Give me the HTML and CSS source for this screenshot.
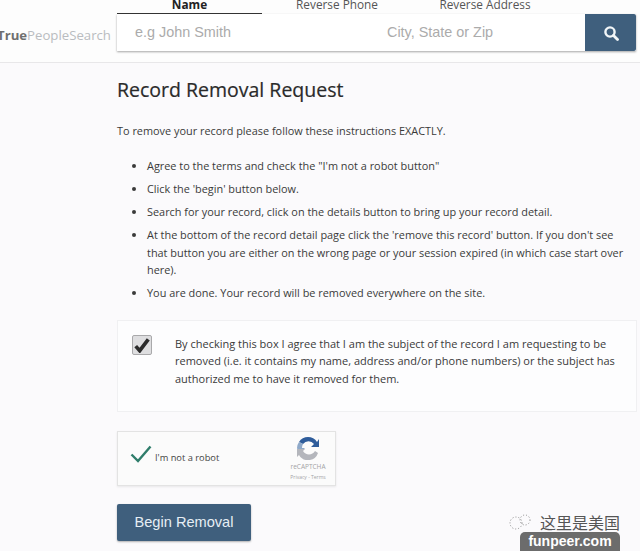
FILE: index.html
```html
<!DOCTYPE html>
<html lang="en">

<head>
    <meta charset="UTF-8">
    <title>Record Removal Request</title>
    <link rel="stylesheet" href="styles.css">
</head>

<body>
    <header class="top">
        <div class="logo"><b>True</b>PeopleSearch</div>
        <div class="search">
            <ul class="tabs">
                <li class="active">Name</li>
                <li>Reverse Phone</li>
                <li>Reverse Address</li>
            </ul>
            <div class="bar">
                <div class="field name">e.g John Smith</div>
                <div class="field city">City, State or Zip</div>
                <div class="go">
                    <svg width="16" height="16" viewBox="0 0 16 16">
                        <circle cx="7" cy="7" r="4.6" fill="none" stroke="#f2f6f8" stroke-width="2.4" />
                        <path d="M10.5 10.5 L14.5 14.5" stroke="#f2f6f8" stroke-width="2.8" stroke-linecap="round" />
                    </svg>
                </div>
            </div>
        </div>
    </header>

    <main class="content">
        <h1>Record Removal Request</h1>
        <p class="intro">To remove your record please follow these instructions EXACTLY.</p>
        <ul class="steps">
            <li>Agree to the terms and check the "I'm not a robot button"</li>
            <li>Click the 'begin' button below.</li>
            <li>Search for your record, click on the details button to bring up your record detail.</li>
            <li>At the bottom of the record detail page click the 'remove this record' button. If you don't see that button you are either on the wrong page or your session expired (in which case start over here).</li>
            <li>You are done. Your record will be removed everywhere on the site.</li>
        </ul>

        <div class="agree">
            <div class="check">
                <svg width="16" height="16" viewBox="0 0 14 14">
                    <path d="M1.5 8 L5 12 L12.5 2" fill="none" stroke="#2b2b2b" stroke-width="3.2" />
                </svg>
            </div>
            <p>By checking this box I agree that I am the subject of the record I am requesting to be removed (i.e. it contains my name, address and/or phone numbers) or the subject has authorized me to have it removed for them.</p>
        </div>

        <div class="captcha">
            <svg class="tick" width="22" height="18" viewBox="0 0 22 18">
                <path d="M1.5 9.5 L8 16 L20.5 1.5" fill="none" stroke="#2f7d6b" stroke-width="2.4" />
            </svg>
            <span class="robot">I'm not a robot</span>
            <div class="badge">
                <svg width="24" height="24" viewBox="0 0 24 24">
                    <path d="M3 6 A10.5 10.5 0 0 1 21 6 L23 3 V11 H15 L18 8 A7 7 0 0 0 7 8 Z" fill="#2f5d9b" />
                    <path d="M3 6 L7 8 A7 7 0 0 0 6 12 H9 L3 18 L1 12 A11 11 0 0 1 3 6 Z" fill="#8fa9c9" />
                    <path d="M1 13 H9 L7 15 A7 7 0 0 0 19 15 L22 17 A10.5 10.5 0 0 1 3 19 L1 21 Z" fill="#b4b6bc" />
                </svg>
                <span class="brand">reCAPTCHA</span>
                <span class="terms">Privacy - Terms</span>
            </div>
        </div>

        <div class="begin">Begin Removal</div>
    </main>

    <div class="mark">
        <svg width="26" height="16" viewBox="0 0 26 16">
            <circle cx="9" cy="9" r="6" fill="none" stroke="#8a8a8a" stroke-width="1" stroke-dasharray="1 2" />
            <circle cx="18" cy="6" r="5" fill="none" stroke="#8a8a8a" stroke-width="1" stroke-dasharray="1 2" />
        </svg>
        <span>这里是美国</span>
    </div>
    <div class="stamp">funpeer.com</div>
</body>

</html>
```

FILE: styles.css
```css
html, body {
    margin: 0;
    padding: 0;
    height: 551px;
    overflow: hidden;
}

body {
    position: relative;
    background-color: #fbfafc;
    color: #3a3a3a;
    font-family: "Open Sans", "Liberation Sans", sans-serif;
}

.top {
    display: flex;
    height: 62px;
    background-color: #fdfdfd;
    border-bottom: 1px solid #e8e7e9;
}

.logo {
    flex: none;
    width: 120px;
    margin-top: 26px;
    margin-left: -3px;
    font-size: 13.2px;
    line-height: 18px;
    white-space: nowrap;
    color: #b9bcc0;
}

.logo b {
    color: #6f6f6f;
}

.search {
    width: 519px;
}

.tabs {
    display: flex;
    height: 14px;
    margin: 0;
    padding: 0;
    list-style: none;
    font-size: 11.8px;
    line-height: 9px;
    color: #555;
}

.tabs li {
    width: 146px;
    text-align: center;
    overflow: hidden;
}

.tabs li:nth-child(2) {
    width: 150px;
}

.tabs .active {
    width: 145px;
    height: 13px;
    border-bottom: 1px solid #333;
    font-weight: 700;
    color: #222;
}

.bar {
    display: flex;
    height: 37px;
    background-color: #fff;
    box-shadow: 0 1px 2px rgba(0, 0, 0, 0.35);
    font-family: "Liberation Sans", sans-serif;
    font-size: 14.4px;
    line-height: 36px;
    color: #ababab;
}

.field.name {
    width: 252px;
    padding-left: 18px;
}

.field.city {
    width: 198px;
}

.go {
    display: flex;
    align-items: center;
    justify-content: center;
    width: 51px;
    margin-left: auto;
    border-radius: 0 2px 2px 0;
    background-color: #3f5f7d;
}

.content {
    width: 520px;
    margin-left: 117px;
}

h1 {
    margin: 13px 0 0;
    font-size: 19.5px;
    font-weight: 400;
    line-height: 27px;
    color: #2a2a2a;
    -webkit-text-stroke: 0.2px #2a2a2a;
}

.intro {
    margin: 20px 0 0;
    font-size: 10.9px;
    line-height: 16px;
}

.steps {
    margin: 18px 0 0;
    padding: 0 7px 0 30px;
    font-size: 10.9px;
    line-height: 17.5px;
}

.steps li {
    margin-bottom: 5.5px;
}

.agree {
    display: flex;
    box-sizing: border-box;
    height: 92px;
    margin-top: 18px;
    padding: 14px 20px 0 14px;
    background-color: #fdfdfe;
    border: 1px solid #f0f0f2;
    font-size: 11px;
    line-height: 17.5px;
}

.check {
    display: flex;
    flex: none;
    align-items: center;
    justify-content: center;
    box-sizing: border-box;
    width: 20px;
    height: 20px;
    margin-right: 23px;
    border: 1px solid #a9a9ab;
    border-radius: 2px;
    background-color: #dedee0;
}

.agree p {
    margin: 0;
}

.captcha {
    display: flex;
    align-items: center;
    box-sizing: border-box;
    width: 219px;
    height: 55px;
    margin-top: 19px;
    padding-left: 12px;
    background-color: #fbfbfb;
    border: 1px solid #e3e3e3;
    box-shadow: 0 1px 2px rgba(0, 0, 0, 0.08);
}

.tick {
    margin-top: -8px;
}

.robot {
    margin-left: 3px;
    margin-top: -2px;
    font-size: 9.3px;
    color: #444;
}

.badge {
    display: flex;
    flex-direction: column;
    align-items: center;
    margin-left: auto;
    width: 54px;
    color: #a3a3a6;
}

.brand {
    font-size: 6.5px;
    line-height: 9px;
    margin-top: 2px;
}

.terms {
    font-size: 5px;
    line-height: 8px;
    margin-top: 2px;
}

.begin {
    box-sizing: border-box;
    width: 134px;
    height: 37px;
    margin-top: 18px;
    border-radius: 2px;
    background-color: #3f5f7d;
    box-shadow: 0 1px 2px rgba(0, 0, 0, 0.3);
    color: #e6eef4;
    font-family: "Liberation Sans", sans-serif;
    font-size: 14.6px;
    line-height: 36px;
    text-align: center;
}

.mark {
    position: absolute;
    top: 513px;
    left: 507px;
    display: flex;
    align-items: center;
    gap: 7px;
    font-family: "Noto Sans CJK SC", sans-serif;
    font-size: 16px;
    line-height: 18px;
    color: #555;
}

.stamp {
    position: absolute;
    top: 532px;
    left: 520px;
    width: 100px;
    height: 19px;
    border-radius: 5px 5px 0 0;
    background-color: #6c6c6c;
    color: #fff;
    font-family: "Liberation Sans", sans-serif;
    font-size: 14px;
    font-weight: 700;
    line-height: 19px;
    text-align: center;
}
```
